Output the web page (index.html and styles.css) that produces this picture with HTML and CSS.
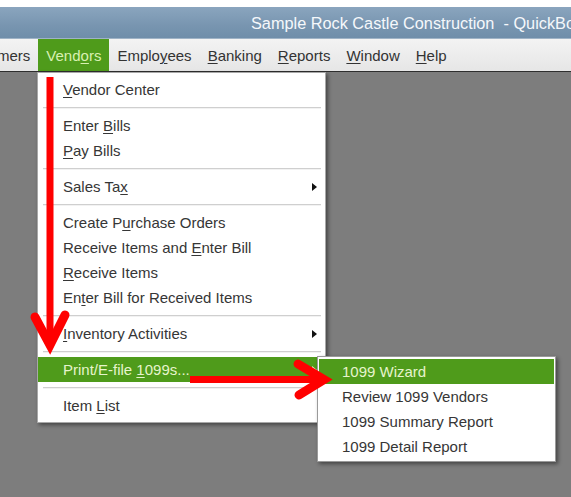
FILE: index.html
```html
<!DOCTYPE html>
<html>
<head>
<meta charset="utf-8">
<link rel="stylesheet" href="styles.css">
</head>
<body>
<div class="app">
  <div class="topgap"></div>
  <div class="titlebar"><span class="title">Sample Rock Castle Construction&nbsp; - QuickBooks Accountant</span></div>
  <div class="menubar">
    <span class="mitem first">mers</span>
    <span class="mitem active"><span>Vend<u>o</u>rs</span></span>
    <span class="mitem"><span>Emplo<u>y</u>ees</span></span>
    <span class="mitem"><span><u>B</u>anking</span></span>
    <span class="mitem"><span><u>R</u>eports</span></span>
    <span class="mitem"><span><u>W</u>indow</span></span>
    <span class="mitem"><span><u>H</u>elp</span></span>
  </div>
  <div class="workspace">
    <div class="dropdown">
      <div class="row"><span class="lbl"><u>V</u>endor Center</span></div>
      <div class="sep"></div>
      <div class="row"><span class="lbl">Enter <u>B</u>ills</span></div>
      <div class="row"><span class="lbl"><u>P</u>ay Bills</span></div>
      <div class="sep"></div>
      <div class="row"><span class="lbl">Sales Ta<u>x</u></span><span class="tri"></span></div>
      <div class="sep"></div>
      <div class="row"><span class="lbl">Create P<u>u</u>rchase Orders</span></div>
      <div class="row"><span class="lbl">Receive Items and <u>E</u>nter Bill</span></div>
      <div class="row"><span class="lbl"><u>R</u>eceive Items</span></div>
      <div class="row"><span class="lbl">En<u>t</u>er Bill for Received Items</span></div>
      <div class="sep"></div>
      <div class="row"><span class="lbl"><u>I</u>nventory Activities</span><span class="tri"></span></div>
      <div class="sep"></div>
      <div class="row hl"><span class="lbl">Print/E-file <u>1</u>099s...</span><span class="tri light"></span>
        <div class="submenu">
          <div class="srow hl">1099 Wizard</div>
          <div class="srow">Review 1099 Vendors</div>
          <div class="srow">1099 Summary Report</div>
          <div class="srow">1099 Detail Report</div>
        </div>
      </div>
      <div class="sep"></div>
      <div class="row"><span class="lbl">Item <u>L</u>ist</span></div>
    </div>
  </div>
  <svg class="arrows" width="571" height="497" viewBox="0 0 571 497">
    <line x1="50" y1="77" x2="50" y2="342" stroke="#f00" stroke-width="7"/>
    <polyline points="35,317 50,345 65,315" fill="none" stroke="#f00" stroke-width="9" stroke-linecap="round" stroke-linejoin="miter"/>
    <line x1="190" y1="379.5" x2="322" y2="379.5" stroke="#f00" stroke-width="7"/>
    <polyline points="298,364 324,379.5 299,395" fill="none" stroke="#f00" stroke-width="9" stroke-linecap="round" stroke-linejoin="miter"/>
  </svg>
</div>
</body>
</html>
```
FILE: styles.css
```css
* { box-sizing: border-box; }
html, body { margin: 0; padding: 0; }
body {
  width: 571px;
  height: 497px;
  overflow: hidden;
  font-family: "Liberation Sans", Arial, sans-serif;
  color: #363636;
  background: #7d7d7d;
}
.app {
  position: relative;
  width: 571px;
  height: 497px;
  display: flex;
  flex-direction: column;
}
.topgap { height: 7px; background: #ffffff; }
.titlebar {
  height: 32px;
  background: linear-gradient(#8aa5be, #7895b0 60%, #6f8eaa);
  display: flex;
  align-items: center;
  padding-left: 251px;
  white-space: nowrap;
  overflow: hidden;
  border-bottom: 1px solid #9fb3c6;
}
.title {
  font-size: 16.3px;
  color: #f5f8fb;
  padding-top: 1px;
}
.menubar {
  height: 33px;
  background: linear-gradient(#f3f3f3, #e6e6e6);
  border-bottom: 1px solid #2e2e2e;
  display: flex;
  align-items: stretch;
  overflow: hidden;
  white-space: nowrap;
  font-size: 15px;
}
.mitem {
  display: flex;
  align-items: center;
  padding: 0 8px;
  color: #333;
}
.mitem.first { margin-left: -11px; }
.mitem.active {
  background: #4f9b1b;
  color: #d9f0b2;
}
u { text-decoration: underline; text-underline-offset: 2px; text-decoration-thickness: 1px; }
.workspace {
  flex: 1;
  background: #7d7d7d;
  display: flex;
  align-items: flex-start;
  padding-left: 37px;
}
.dropdown {
  width: 289px;
  background: #fff;
  border: 1px solid #a8a8a8;
  padding: 4px 0 4px;
  box-shadow: 2px 2px 4px rgba(0,0,0,0.45);
  font-size: 15px;
}
.row {
  position: relative;
  height: 25px;
  display: flex;
  align-items: center;
  padding-left: 25px;
  color: #363636;
  white-space: nowrap;
}
.lbl { white-space: pre; }
.row.hl {
  background: #4f9b1b;
  color: #e6f4cc;
}
.sep {
  height: 11px;
  display: flex;
  align-items: center;
  padding: 0 4px 0 5px;
}
.sep::before {
  content: "";
  flex: 1;
  height: 1px;
  background: #cfcfcf;
  box-shadow: 0 1px 0 #f2f2f2;
}
.tri {
  position: absolute;
  right: 8px;
  top: 9px;
  width: 0;
  height: 0;
  border-top: 4px solid transparent;
  border-bottom: 4px solid transparent;
  border-left: 5px solid #111;
}
.tri.light { border-left-color: #e6f4cc; }
.submenu {
  position: absolute;
  left: 279px;
  top: -1px;
  width: 239px;
  background: #fff;
  border: 1px solid #9a9a9a;
  padding: 2px 1px 2px;
  box-shadow: 2px 2px 4px rgba(0,0,0,0.45);
  z-index: 2;
}
.srow {
  height: 25px;
  display: flex;
  align-items: center;
  padding-left: 23px;
  color: #363636;
}
.srow.hl {
  background: #4f9b1b;
  color: #e6f4cc;
}
.arrows {
  position: absolute;
  left: 0;
  top: 0;
  pointer-events: none;
  z-index: 5;
}
```
